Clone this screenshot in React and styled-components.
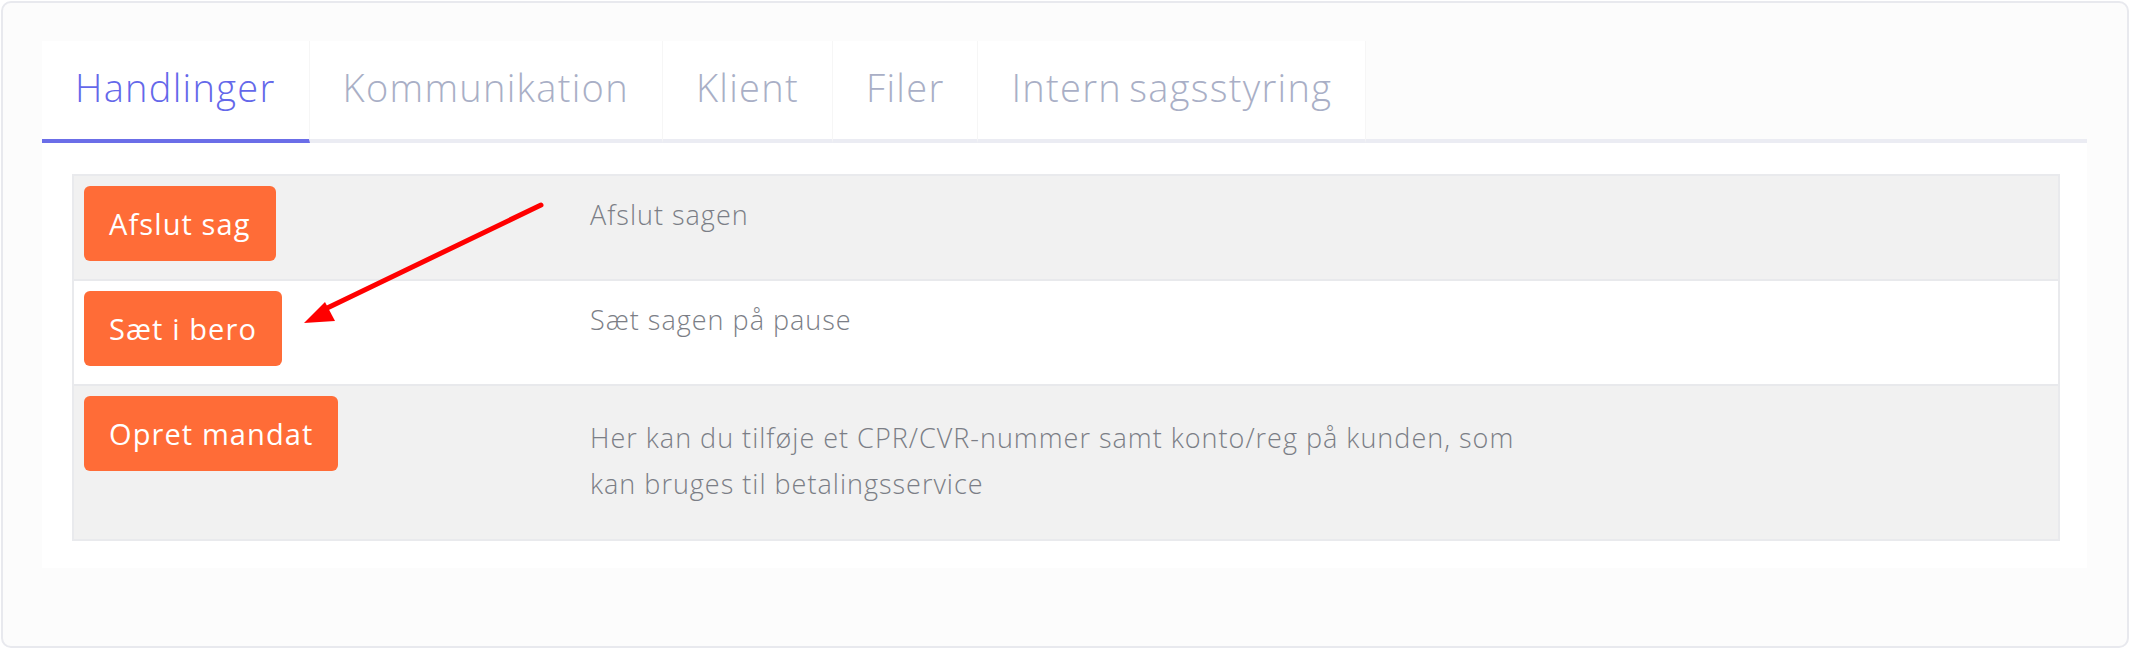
import React, { useState } from "react"
import styled, { createGlobalStyle } from "styled-components"

const GlobalStyle = createGlobalStyle`
  html, body {
    margin: 0;
    padding: 0;
    background: #ffffff;
  }
  body {
    font-family: "Open Sans", "Liberation Sans", sans-serif;
  }
`

const Page = styled.div`
  padding: 1px;
`

const Card = styled.div`
  position: relative;
  box-sizing: border-box;
  width: 2128px;
  height: 647px;
  background: #fcfcfc;
  border: 2px solid #e8e9ee;
  border-radius: 10px;
  padding: 38px 40px 0 39px;
`

const TabBar = styled.div`
  display: flex;
  border-bottom: 4px solid #ebecf3;
`

const Tab = styled.button`
  box-sizing: border-box;
  height: 102px;
  margin-bottom: -4px;
  padding: 0 33px 6px;
  background: #ffffff;
  border: none;
  border-right: 1px solid #f6f6f6;
  border-bottom: 4px solid ${(p) => (p.$active ? "#6b6ee8" : "#ebecf3")};
  font-family: "Open Sans", sans-serif;
  font-weight: 300;
  font-size: 38px;
  letter-spacing: 1.3px;
  word-spacing: -4px;
  color: ${(p) => (p.$active ? "#6468ea" : "#a9afc6")};
  cursor: pointer;
  white-space: nowrap;
`

const Panel = styled.div`
  background: #ffffff;
  padding: 31px 27px 27px 30px;
`

const Table = styled.div`
  border: 2px solid #e9eaed;
  display: flex;
  flex-direction: column;
`

const Row = styled.div`
  display: flex;
  background: ${(p) => (p.$striped ? "#f1f1f1" : "#ffffff")};
  & + & {
    border-top: 2px solid #e8e9ec;
  }
`

const ActionCell = styled.div`
  box-sizing: border-box;
  width: 516px;
  flex-shrink: 0;
  padding: 10px 10px 18px;
`

const ActionButton = styled.button`
  height: 75px;
  padding: 0 25px;
  background: #ff6c37;
  border: none;
  border-radius: 6px;
  color: #ffffff;
  font-family: "Open Sans", sans-serif;
  font-weight: 400;
  font-size: 29px;
  letter-spacing: 1.1px;
  cursor: pointer;
`

const Description = styled.div`
  flex: 1;
  align-self: ${(p) => (p.$centered ? "center" : "flex-start")};
  padding: ${(p) => (p.$centered ? "29px 0 32px" : "16px 0 0")};
  font-family: "Open Sans", sans-serif;
  font-weight: 300;
  font-size: 27px;
  letter-spacing: 1px;
  line-height: 46px;
  color: #7b7e86;
  max-width: 950px;
`

const Annotation = styled.svg`
  position: absolute;
  left: 0;
  top: 0;
  pointer-events: none;
`

const tabs = ["Handlinger", "Kommunikation", "Klient", "Filer", "Intern sagsstyring"]

const actions = [
  { label: "Afslut sag", text: "Afslut sagen" },
  { label: "Sæt i bero", text: "Sæt sagen på pause" },
  {
    label: "Opret mandat",
    text: "Her kan du tilføje et CPR/CVR-nummer samt konto/reg på kunden, som kan bruges til betalingsservice",
    centered: true,
  },
]

export default function App() {
  const [active, setActive] = useState(0)
  return (
    <Page>
      <GlobalStyle />
      <Card>
        <TabBar>
          {tabs.map((t, i) => (
            <Tab key={t} $active={i === active} onClick={() => setActive(i)}>
              {t}
            </Tab>
          ))}
        </TabBar>
        <Panel>
          <Table>
            {actions.map((a, i) => (
              <Row key={a.label} $striped={i % 2 === 0}>
                <ActionCell>
                  <ActionButton>{a.label}</ActionButton>
                </ActionCell>
                <Description $centered={a.centered}>{a.text}</Description>
              </Row>
            ))}
          </Table>
        </Panel>
        {/* red arrow annotation drawn over the table */}
        <Annotation width="2128" height="647" viewBox="0 0 2128 647">
          <line x1="538" y1="202" x2="318" y2="308" stroke="#ff0000" strokeWidth="5" strokeLinecap="round" />
          <polygon points="301,320 322,299 332,318" fill="#ff0000" />
        </Annotation>
      </Card>
    </Page>
  )
}
